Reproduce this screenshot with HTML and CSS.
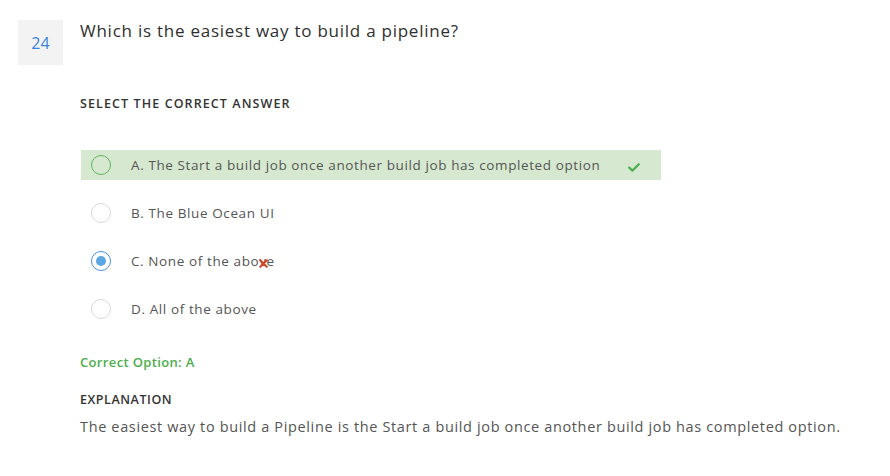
FILE: index.html
```html
<!DOCTYPE html>
<html>
<head>
<meta charset="utf-8">
<link rel="stylesheet" href="styles.css">
</head>
<body>
<div class="page">
  <div class="num">24</div>
  <div class="main">
    <h1 class="question">Which is the easiest way to build a pipeline?</h1>
    <div class="label">SELECT THE CORRECT ANSWER</div>
    <ul class="options">
      <li class="opt correct">
        <span class="radio radio-green"></span>
        <span class="opt-text">A. The Start a build job once another build job has completed option</span>
        <svg class="check" width="12" height="9" viewBox="0 0 12 9"><path d="M1.2 4.6 L4.4 7.6 L10.8 1.2" fill="none" stroke="#4caf50" stroke-width="2.2" stroke-linecap="round" stroke-linejoin="round"/></svg>
      </li>
      <li class="opt">
        <span class="radio"></span>
        <span class="opt-text">B. The Blue Ocean UI</span>
      </li>
      <li class="opt">
        <span class="radio radio-checked"><span class="dot"></span></span>
        <span class="opt-text wrong">C. None of the above<svg class="cross" width="9" height="9" viewBox="0 0 9 9"><path d="M1.3 1.3 L7.7 7.7 M7.7 1.3 L1.3 7.7" stroke="#d0452b" stroke-width="2.2" stroke-linecap="round"/></svg></span>
      </li>
      <li class="opt">
        <span class="radio"></span>
        <span class="opt-text">D. All of the above</span>
      </li>
    </ul>
    <div class="correct-opt">Correct Option: A</div>
    <div class="label expl-label">EXPLANATION</div>
    <p class="expl">The easiest way to build a Pipeline is the Start a build job once another build job has completed option.</p>
  </div>
</div>
</body>
</html>
```

FILE: styles.css
```css
* { box-sizing: border-box; }
body {
  margin: 0;
  background: #fff;
  font-family: "Open Sans", "Lato", sans-serif;
  color: #333;
}
.page {
  display: flex;
  align-items: flex-start;
  gap: 17px;
  padding: 20px 0 0 18px;
}
.num {
  flex: none;
  width: 45px;
  height: 45px;
  background: #f3f3f3;
  color: #3b83de;
  font-size: 16px;
  display: flex;
  align-items: center;
  justify-content: center;
}
.main {
  flex: 1;
}
.question {
  margin: 0;
  font-size: 17px;
  font-weight: 400;
  line-height: 22px;
  color: #2f2f2f;
  letter-spacing: 0.75px;
}
.label {
  margin-top: 53px;
  font-size: 12.5px;
  font-weight: 600;
  line-height: 17px;
  color: #333;
  letter-spacing: 1.1px;
}
.options {
  list-style: none;
  margin: 38px 0 0 1px;
  padding: 0;
  display: flex;
  flex-direction: column;
  gap: 18px;
}
.opt {
  position: relative;
  display: flex;
  align-items: center;
  height: 30px;
  width: 580px;
  padding-left: 10px;
  font-size: 13.5px;
  color: #555;
  letter-spacing: 0.6px;
}
.opt.correct {
  background: #d6e9d0;
}
.radio {
  flex: none;
  width: 20px;
  height: 20px;
  border-radius: 50%;
  border: 1px solid #d9d9d9;
  background: #fff;
  margin-right: 20px;
  display: flex;
  align-items: center;
  justify-content: center;
}
.radio-green {
  border: 1.5px solid #5cb85c;
  background: transparent;
}
.radio-checked {
  border: 1.5px solid #4a90e2;
}
.dot {
  width: 10px;
  height: 10px;
  border-radius: 50%;
  background: #5ca6e3;
}
.opt-text {
  position: relative;
}
.check {
  position: absolute;
  left: 547px;
  top: 13px;
}
.cross {
  position: absolute;
  right: 7px;
  top: 7px;
}
.correct-opt {
  margin-top: 30px;
  font-size: 13px;
  font-weight: 600;
  color: #4cae4c;
  line-height: 16px;
  letter-spacing: 0.35px;
}
.expl-label {
  margin-top: 21px;
  letter-spacing: 0.55px;
}
.expl {
  margin: 9px 0 0;
  font-size: 14.5px;
  line-height: 20px;
  color: #555;
  letter-spacing: 0.64px;
}
```
